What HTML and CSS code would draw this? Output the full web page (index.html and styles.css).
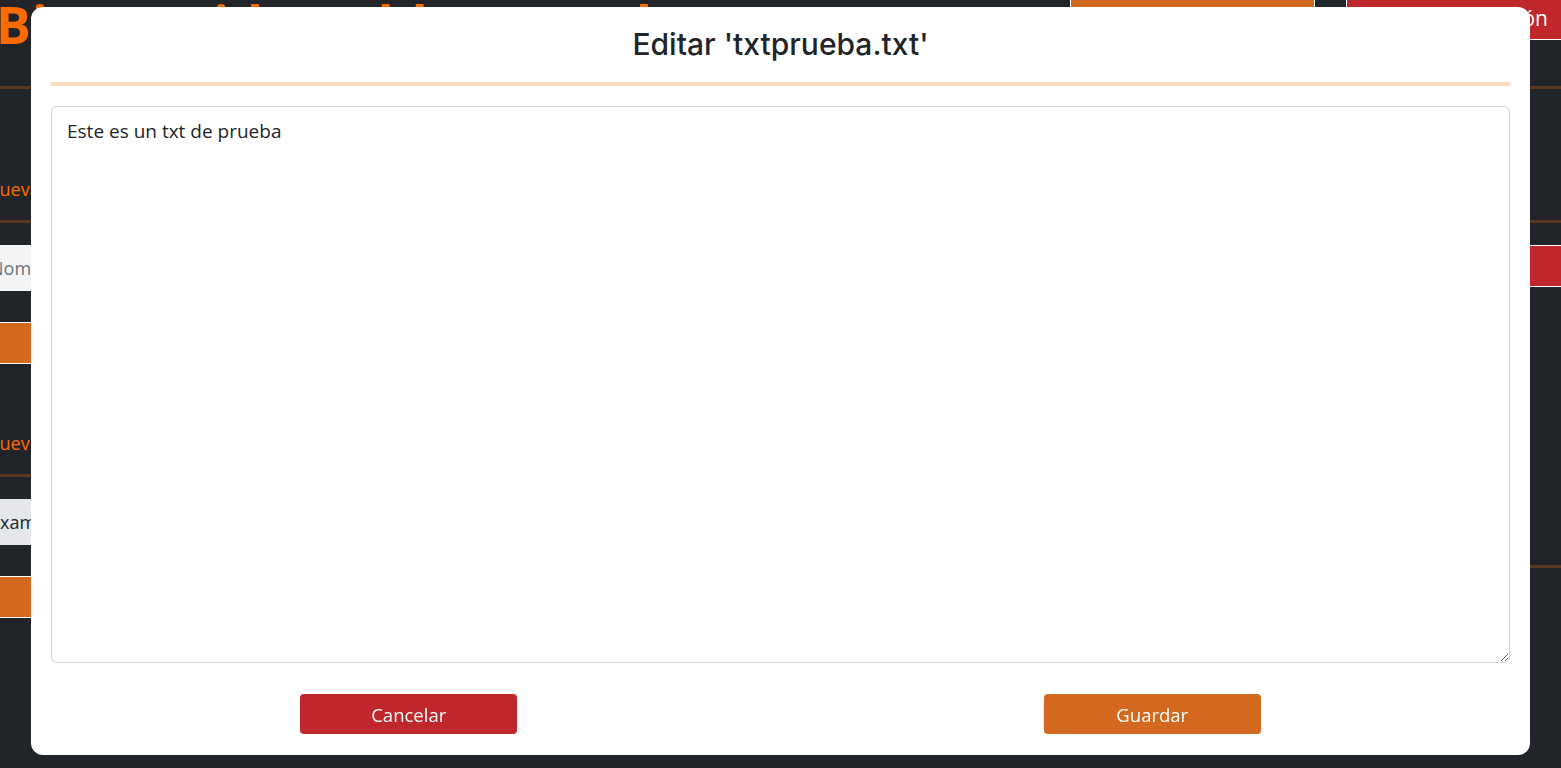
FILE: index.html
```html
<!DOCTYPE html>
<html lang="es">
<head>
<meta charset="utf-8">
<title>Editar archivo</title>
<link rel="stylesheet" href="styles.css">
</head>
<body>
<div class="page">
  <header class="topbar">
    <h1 class="welcome">Bienvenido Pablo Bernal</h1>
    <div class="top-actions">
      <button class="btn btn-orange top-btn">Cambiar contraseña</button>
      <button class="btn btn-red top-btn logout">Cerrar Sesión</button>
    </div>
  </header>
  <main class="columns">
    <section class="left">
      <div class="block">
        <h2 class="sec-title">Nueva carpeta</h2>
        <div class="rule"></div>
        <input class="field" type="text" placeholder="Nombre de la carpeta">
        <button class="btn btn-orange wide">Crear carpeta</button>
      </div>
      <div class="block second">
        <h2 class="sec-title">Nuevo archivo</h2>
        <div class="rule"></div>
        <input class="field dark" type="text" value="example.txt">
        <button class="btn btn-orange wide">Crear archivo</button>
      </div>
    </section>
    <section class="right">
      <div class="rule"></div>
      <div class="right-actions">
        <button class="btn btn-red side-btn">Eliminar</button>
      </div>
      <div class="rule low"></div>
    </section>
  </main>
</div>

<div class="modal">
  <div class="modal-head">
    <h3 class="modal-title">Editar 'txtprueba.txt'</h3>
  </div>
  <div class="modal-body">
    <textarea class="editor">Este es un txt de prueba</textarea>
  </div>
  <div class="modal-foot">
    <div class="foot-cell"><button class="btn btn-red action">Cancelar</button></div>
    <div class="foot-cell"><button class="btn btn-orange action">Guardar</button></div>
  </div>
</div>
</body>
</html>
```
FILE: styles.css
```css
* { box-sizing: border-box; }
html, body { margin: 0; padding: 0; }
body {
  background: #212529;
  font-family: "Open Sans", "Noto Sans", sans-serif;
  overflow: hidden;
  height: 768px;
}
.page { width: 1561px; }
.btn {
  font-family: "Open Sans", "Noto Sans", sans-serif;
  color: #fff;
  border: 1px solid #fff;
  cursor: pointer;
}
.btn-orange { background: #d2691e; }
.btn-red { background: #bf272a; }

.topbar {
  display: flex;
  justify-content: space-between;
  align-items: flex-start;
  height: 89px;
  border-bottom: 3px solid #5a3a1f;
}
.welcome {
  margin: -12px 0 0 -4px;
  font-family: "Open Sans", sans-serif;
  font-weight: 700;
  font-size: 52px;
  color: #ff6a00;
  letter-spacing: 1px;
  white-space: nowrap;
}
.top-actions { display: flex; gap: 31px; margin-top: -4px; margin-right: -56px; }
.top-btn { height: 44px; font-size: 21px; padding: 0 10px; }
.top-btn:first-child { width: 245px; }
.logout { width: 271px; border-right: none; }

.columns { display: flex; justify-content: space-between; }
.left { width: 640px; margin-left: -22px; }
.right { width: 700px; padding-top: 131px; }

.block { padding-top: 86px; }
.block.second { padding-top: 65px; }
.sec-title {
  margin: 0 0 17px 8px;
  font-weight: 400;
  font-size: 18px;
  line-height: 28px;
  color: #ff6a00;
  white-space: nowrap;
}
.rule { height: 3px; background: #5a3a1f; }
.field {
  display: block;
  margin-top: 22px;
  width: 100%;
  height: 46px;
  padding: 0 12px;
  font-family: "Open Sans", sans-serif;
  font-size: 18px;
  background: #f3f4f5;
  border: none;
}
.field::placeholder { color: #6c757d; }
.field.dark { color: #212529; background: #e5e7ea; }
.wide { display: block; margin-top: 31px; width: 100%; height: 42px; font-size: 17px; }

.right-actions { display: flex; justify-content: flex-end; margin-top: 22px; }
.side-btn { width: 160px; height: 42px; font-size: 17px; border-right: none; }
.rule.low { margin-top: 278px; }

.modal {
  position: fixed;
  left: 31px;
  top: 7px;
  width: 1499px;
  height: 748px;
  background: #fff;
  border-radius: 12px;
  padding: 0 20px;
  display: flex;
  flex-direction: column;
}
.modal-head {
  height: 79px;
  border-bottom: 4px solid #fcdcbd;
  display: flex;
  align-items: center;
  justify-content: center;
  padding-bottom: 2px;
}
.modal-title {
  margin: 0;
  font-family: "Inter", sans-serif;
  font-weight: 500;
  font-size: 30px;
  color: #212529;
}
.modal-body { padding-top: 20px; }
.editor {
  display: block;
  width: 100%;
  height: 557px;
  border: 1px solid #ced4da;
  border-radius: 6px;
  padding: 10px 15px;
  font-family: "Open Sans", "Noto Sans", sans-serif;
  font-size: 19px;
  line-height: 28px;
  color: #212529;
  resize: both;
  outline: none;
}
.modal-foot {
  display: grid;
  grid-template-columns: 1fr 1fr;
  padding: 31px 6px 0 6px;
  margin: 0 -20px;
}
.foot-cell { display: flex; justify-content: center; }
.action {
  width: 217px;
  height: 40px;
  border: none;
  border-radius: 4px;
  font-size: 18.5px;
}
```
